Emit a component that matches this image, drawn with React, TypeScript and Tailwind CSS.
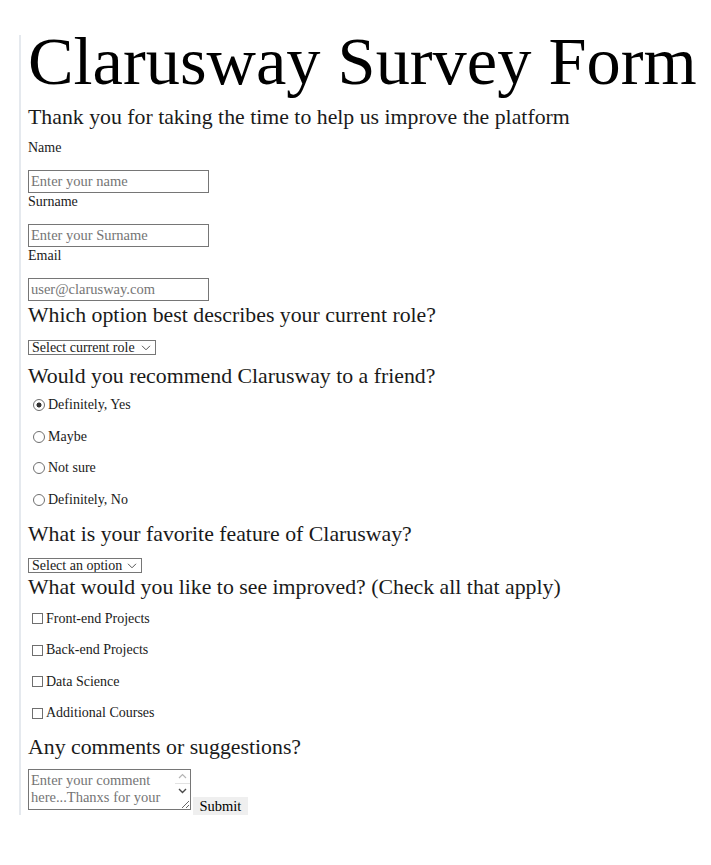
import React, { useState } from 'react';

const roles = ['Select current role', 'Student', 'Full Time Job', 'Full Time Learner', 'Prefer not to say', 'Other'];
const features = ['Select an option', 'Challenges', 'Projects', 'Community', 'Open Source'];
const recommendOptions = ['Definitely, Yes', 'Maybe', 'Not sure', 'Definitely, No'];
const improveOptions = ['Front-end Projects', 'Back-end Projects', 'Data Science', 'Additional Courses'];

// Small chevron like the browser's own select arrow
const Chevron: React.FC = () => (
  <svg
    className="pointer-events-none absolute right-[5px] top-[5px] h-[6px] w-[10px]"
    viewBox="0 0 10 6"
    fill="none"
    stroke="#555"
    strokeWidth={1}
  >
    <path d="M1 0.8 L5 4.8 L9 0.8" />
  </svg>
);

interface SelectProps {
  options: string[];
  width: string;
}

const SmallSelect: React.FC<SelectProps> = ({ options, width }) => (
  <div className="relative self-start">
    <select
      className={`block h-[15px] ${width} appearance-none border border-[#767676] bg-white pl-[3px] text-[14px] leading-[13px] text-[#1a1a1a] outline-none`}
      defaultValue={options[0]}
    >
      {options.map((opt) => (
        <option key={opt} value={opt}>
          {opt}
        </option>
      ))}
    </select>
    <Chevron />
  </div>
);

const App: React.FC = () => {
  const [recommend, setRecommend] = useState<string>('Definitely, Yes');
  const [improve, setImprove] = useState<string[]>([]);

  const toggleImprove = (item: string) => {
    setImprove((prev) => (prev.includes(item) ? prev.filter((i) => i !== item) : [...prev, item]));
  };

  const inputClass =
    'block h-[23px] w-[181px] border border-[#767676] bg-white px-[2px] text-[14.5px] text-[#1a1a1a] outline-none placeholder:text-[#757575]';
  const labelClass = 'block text-[14px] leading-[16px] text-[#1a1a1a]';
  const questionClass = 'text-[21.8px] leading-[25px] text-[#1a1a1a]';

  return (
    <div className="min-h-screen bg-white pl-[19px] pt-[35px] font-['Liberation_Serif','Times_New_Roman',serif]">
      <form
        className="flex flex-col border-l-2 border-[#e5e9ee] pl-[7px] pt-[2px]"
        onSubmit={(e) => e.preventDefault()}
      >
        <h1 className="text-[68.4px] font-normal leading-[48px] text-black">Clarusway Survey Form</h1>
        <p className={`mt-[20px] ${questionClass}`}>
          Thank you for taking the time to help us improve the platform
        </p>

        {/* Personal details */}
        <label htmlFor="name" className={`mt-[10px] ${labelClass}`}>
          Name
        </label>
        <input id="name" type="text" placeholder="Enter your name" className={`mt-[14px] ${inputClass}`} />
        <label htmlFor="surname" className={`mt-[1px] ${labelClass}`}>
          Surname
        </label>
        <input id="surname" type="text" placeholder="Enter your Surname" className={`mt-[14px] ${inputClass}`} />
        <label htmlFor="email" className={`mt-[1px] ${labelClass}`}>
          Email
        </label>
        <input id="email" type="email" placeholder="user@clarusway.com" className={`mt-[14px] ${inputClass}`} />

        {/* Role */}
        <p className={`mt-[2px] ${questionClass}`}>Which option best describes your current role?</p>
        <div className="mt-[12px] flex">
          <SmallSelect options={roles} width="w-[128px]" />
        </div>

        {/* Recommend */}
        <p className={`mt-[9px] ${questionClass}`}>Would you recommend Clarusway to a friend?</p>
        <div className="mt-[8px] flex flex-col gap-[15.5px]">
          {recommendOptions.map((opt) => (
            <label key={opt} className="flex h-[16px] items-center text-[14px] leading-[16px] text-[#1a1a1a]">
              <input
                type="radio"
                name="recommend"
                value={opt}
                checked={recommend === opt}
                onChange={() => setRecommend(opt)}
                className="ml-[5px] mr-[3px] h-[12px] w-[12px] shrink-0 appearance-none rounded-full border border-[#6f6f6f] bg-white checked:bg-[radial-gradient(circle,#333_2.2px,transparent_2.8px)]"
              />
              {opt}
            </label>
          ))}
        </div>

        {/* Favorite feature */}
        <p className={`mt-[14px] ${questionClass}`}>What is your favorite feature of Clarusway?</p>
        <div className="mt-[11px] flex">
          <SmallSelect options={features} width="w-[114px]" />
        </div>

        {/* Improvements */}
        <p className={`mt-[2px] ${questionClass}`}>What would you like to see improved? (Check all that apply)</p>
        <div className="mt-[11px] flex flex-col gap-[15.5px]">
          {improveOptions.map((opt) => (
            <label key={opt} className="flex h-[16px] items-center text-[14px] leading-[16px] text-[#1a1a1a]">
              <input
                type="checkbox"
                value={opt}
                checked={improve.includes(opt)}
                onChange={() => toggleImprove(opt)}
                className="ml-[4px] mr-[3px] h-[11px] w-[11px] shrink-0 appearance-none border border-[#6f6f6f] bg-white checked:bg-[#333]"
              />
              {opt}
            </label>
          ))}
        </div>

        {/* Comments */}
        <p className={`mt-[13.5px] ${questionClass}`}>Any comments or suggestions?</p>
        <div className="mt-[9px] flex items-start">
          <div className="relative">
            <textarea
              placeholder="Enter your comment here...Thanxs for your time!"
              className="block h-[41px] w-[163px] resize border border-[#767676] bg-white py-[2px] pl-[2px] pr-[17px] text-[14.5px] leading-[17px] text-[#1a1a1a] outline-none placeholder:text-[#757575]"
            />
            {/* scrollbar arrows */}
            <div className="pointer-events-none absolute right-[1px] top-[1px] flex w-[15px] flex-col items-center gap-[4px] bg-white pt-[3px]">
              <svg className="h-[6px] w-[9px]" viewBox="0 0 9 6" fill="none" stroke="#b5b5b5" strokeWidth={1.2}>
                <path d="M1 5 L4.5 1.5 L8 5" />
              </svg>
              <div className="h-px w-[15px] bg-[#e2e2e2]" />
              <svg className="h-[6px] w-[9px]" viewBox="0 0 9 6" fill="none" stroke="#4a4a4a" strokeWidth={1.4}>
                <path d="M1 1 L4.5 4.5 L8 1" />
              </svg>
            </div>
          </div>
          <button
            type="submit"
            className="ml-[2px] mt-[28px] h-[18px] bg-[#efefef] px-[6.5px] text-[14.5px] leading-[18px] text-black"
          >
            Submit
          </button>
        </div>
      </form>
    </div>
  );
};

export default App;
